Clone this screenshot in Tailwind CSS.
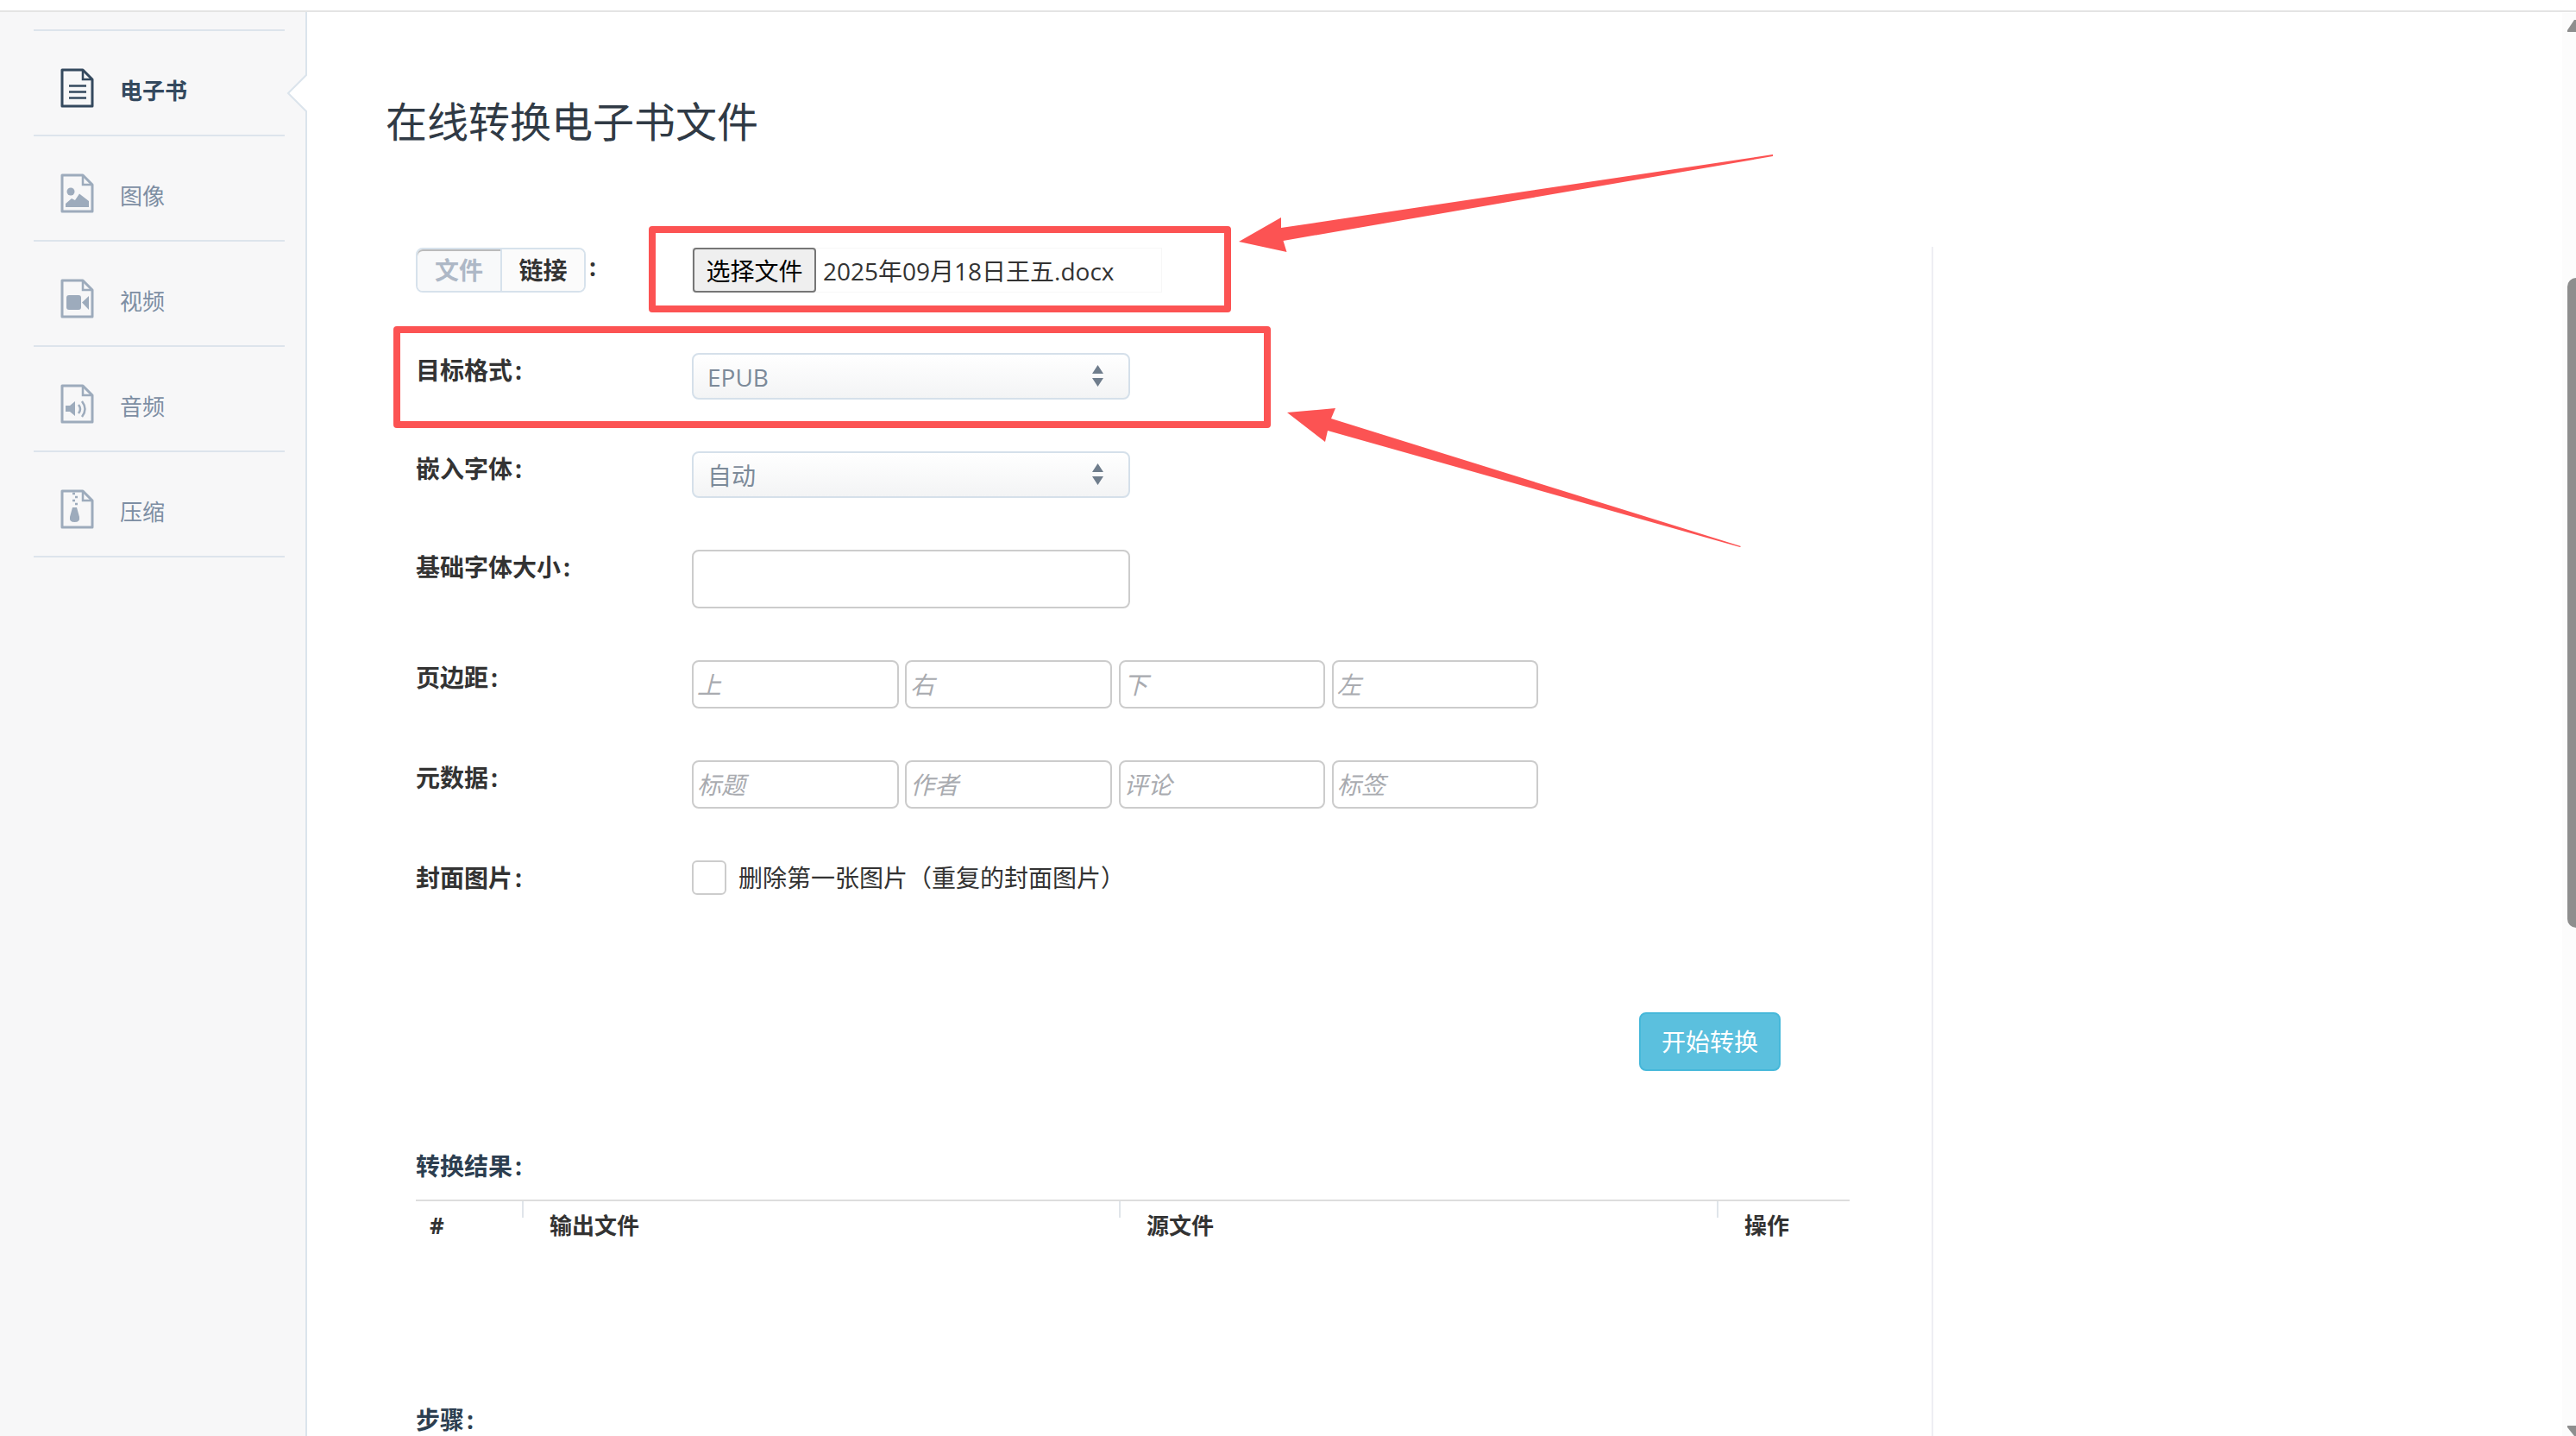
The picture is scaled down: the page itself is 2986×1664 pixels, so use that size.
<!DOCTYPE html>
<html lang="zh-CN">
  <head>
    <meta charset="UTF-8" />
    <title>在线转换电子书文件</title>
    <script src="https://cdn.jsdelivr.net/npm/@tailwindcss/browser@4"></script>
  </head>
  <body class="bg-white text-[#333] antialiased [font-family:'Open_Sans','Noto_Sans_CJK_SC',sans-serif]">
    <div class="relative flex h-[1664px] w-[2986px] flex-col overflow-hidden">
      <!-- top strip -->
      <div class="h-[14px] shrink-0 border-b-2 border-[#e4e4e4]"></div>

      <div class="flex min-h-0 flex-1">
        <!-- sidebar -->
        <aside class="relative w-[356px] shrink-0 border-r-2 border-[#dbe4ec] bg-[#f7f7f8] pt-[20px]">
          <ul class="ml-[39px] w-[291px] border-t-2 border-[#dde4ec] text-[26px] leading-none text-[#7d8ea3]">
            <li class="flex h-[122px] items-start border-b-2 border-[#dde4ec] pl-[31px] pt-[43px] font-bold text-[#34495e]">
              <svg class="mr-[30px] h-[46px] w-[39px]" viewBox="0 0 39 46" fill="none" stroke="#34495e" stroke-width="3">
                <path d="M2 2H26L37 13V44H2Z" stroke-linejoin="round" />
                <path d="M26 2V13H37" stroke-width="2.5" />
                <path d="M10 20.5H30M10 27.5H30M10 34.5H30" stroke-width="2.5" />
              </svg>
              <span class="mt-[13px]">电子书</span>
            </li>
            <li class="flex h-[122px] items-start border-b-2 border-[#dde4ec] pl-[31px] pt-[43px]">
              <svg class="mr-[30px] h-[46px] w-[39px]" viewBox="0 0 39 46" fill="none" stroke="#9dabbc" stroke-width="3">
                <path d="M2 2H26L37 13V44H2Z" stroke-linejoin="round" />
                <path d="M26 2V13H37" stroke-width="2.5" />
                <circle cx="12" cy="21" r="4.5" fill="#9dabbc" stroke="none" />
                <path d="M6 39V35L13 29L17 31L22 23.5L33 32V39Z" fill="#9dabbc" stroke="none" />
              </svg>
              <span class="mt-[13px]">图像</span>
            </li>
            <li class="flex h-[122px] items-start border-b-2 border-[#dde4ec] pl-[31px] pt-[43px]">
              <svg class="mr-[30px] h-[46px] w-[39px]" viewBox="0 0 39 46" fill="none" stroke="#9dabbc" stroke-width="3">
                <path d="M2 2H26L37 13V44H2Z" stroke-linejoin="round" />
                <path d="M26 2V13H37" stroke-width="2.5" />
                <rect x="7" y="19" width="17" height="17" rx="3" fill="#9dabbc" stroke="none" />
                <path d="M25 27.5L33 20V36Z" fill="#9dabbc" stroke="none" />
              </svg>
              <span class="mt-[13px]">视频</span>
            </li>
            <li class="flex h-[122px] items-start border-b-2 border-[#dde4ec] pl-[31px] pt-[43px]">
              <svg class="mr-[30px] h-[46px] w-[39px]" viewBox="0 0 39 46" fill="none" stroke="#9dabbc" stroke-width="3">
                <path d="M2 2H26L37 13V44H2Z" stroke-linejoin="round" />
                <path d="M26 2V13H37" stroke-width="2.5" />
                <path d="M6 25H11L17 20V37L11 32H6Z" fill="#9dabbc" stroke="none" />
                <path d="M21 24Q25 29 21 34M25 20Q32 29 25 38" stroke-width="2.5" />
              </svg>
              <span class="mt-[13px]">音频</span>
            </li>
            <li class="flex h-[122px] items-start border-b-2 border-[#dde4ec] pl-[31px] pt-[43px]">
              <svg class="mr-[30px] h-[46px] w-[39px]" viewBox="0 0 39 46" fill="none" stroke="#9dabbc" stroke-width="3">
                <path d="M2 2H26L37 13V44H2Z" stroke-linejoin="round" />
                <path d="M26 2V13H37" stroke-width="2.5" />
                <path d="M14 5H17M17 9H20M14 13H17M17 17H20" stroke-width="2.5" />
                <path d="M14 21H19L22 32Q23 38 16.5 38Q10 38 11 32Z" fill="#9dabbc" stroke="none" />
              </svg>
              <span class="mt-[13px]">压缩</span>
            </li>
          </ul>
          <!-- active item notch -->
          <svg class="absolute right-[-2px] top-[71px] h-[46px] w-[24px]" viewBox="0 0 24 46">
            <path d="M24 1L2 23L24 45Z" fill="#fff" />
            <path d="M24 1L2 23L24 45" fill="none" stroke="#dbe4ec" stroke-width="2" />
          </svg>
        </aside>

        <!-- main content -->
        <main class="min-w-0 flex-1 pl-[91px]">
          <h1 class="pt-[92px] text-[48px] font-normal leading-[70px] text-[#303a45]">在线转换电子书文件</h1>

          <div class="mt-[110px] h-[1400px] w-[1794px] border-r-2 border-[#eeeef3] pl-[35px] pt-px">
            <!-- file source -->
            <div class="flex h-[52px]">
              <div class="flex h-[52px] w-[320px] shrink-0 items-start text-[28px] font-bold">
                <div class="flex h-[52px] w-[197px] rounded-[8px] border-2 border-[#d7e2ec] leading-[48px]">
                  <span class="w-[98px] rounded-l-[6px] border-r-2 border-[#d7e2ec] bg-[#f8f9fa] text-center text-[#aeb8c6] shadow-[inset_0_2px_0_#bbb]">文件</span>
                  <span class="flex-1 rounded-r-[6px] bg-[#fbfbfb] text-center text-[#333]">链接</span>
                </div>
                <span class="ml-[4px] leading-[44px]">:</span>
              </div>
              <div class="flex h-[52px] w-[545px] items-center border border-[#f7f7f7]">
                <button class="h-[52px] w-[143px] rounded-[4px] border-2 border-[#767676] bg-[#efefef] pt-[2px] text-[28px] leading-none text-black">选择文件</button>
                <span class="ml-[8px] pt-[1px] text-[28px] text-[#333]">2025年09月18日王五.docx</span>
              </div>
            </div>

            <!-- target format -->
            <div class="mt-[70px] flex">
              <label class="w-[320px] shrink-0 text-[28px] font-bold leading-[40px]">目标格式<span class="ml-[3px]">:</span></label>
              <div class="relative h-[54px] w-[508px]">
                <select class="h-[54px] w-[508px] appearance-none rounded-[8px] border-2 border-[#d5e0ea] bg-gradient-to-b from-white to-[#f3f4f5] pl-[16px] pt-[2px] text-[28px] text-[#7c8a99]">
                  <option>EPUB</option>
                </select>
                <svg class="pointer-events-none absolute right-[31px] top-[14px] h-[25px] w-[13px]" viewBox="0 0 13 25" fill="#6f7d8c">
                  <path d="M6.5 0L13 10H0ZM0 15H13L6.5 25Z" />
                </svg>
              </div>
            </div>

            <!-- embed font -->
            <div class="mt-[60px] flex">
              <label class="w-[320px] shrink-0 text-[28px] font-bold leading-[40px]">嵌入字体<span class="ml-[3px]">:</span></label>
              <div class="relative h-[54px] w-[508px]">
                <select class="h-[54px] w-[508px] appearance-none rounded-[8px] border-2 border-[#d5e0ea] bg-gradient-to-b from-white to-[#f3f4f5] pl-[16px] pt-[2px] text-[28px] text-[#7c8a99]">
                  <option>自动</option>
                </select>
                <svg class="pointer-events-none absolute right-[31px] top-[14px] h-[25px] w-[13px]" viewBox="0 0 13 25" fill="#6f7d8c">
                  <path d="M6.5 0L13 10H0ZM0 15H13L6.5 25Z" />
                </svg>
              </div>
            </div>

            <!-- base font size -->
            <div class="mt-[60px] flex">
              <label class="w-[320px] shrink-0 text-[28px] font-bold leading-[40px]">基础字体大小<span class="ml-[3px]">:</span></label>
              <input class="h-[68px] w-[508px] rounded-[8px] border-2 border-[#ccc] bg-white" />
            </div>

            <!-- margins -->
            <div class="mt-[60px] flex">
              <label class="w-[320px] shrink-0 text-[28px] font-bold leading-[40px]">页边距<span class="ml-[3px]">:</span></label>
              <div class="flex gap-[7.75px]">
                <input placeholder="上" class="h-[56px] w-[239.5px] rounded-[8px] border-2 border-[#ccc] px-[4px] text-[28px] placeholder:italic placeholder:text-[#a9abb0]" />
                <input placeholder="右" class="h-[56px] w-[239.5px] rounded-[8px] border-2 border-[#ccc] px-[4px] text-[28px] placeholder:italic placeholder:text-[#a9abb0]" />
                <input placeholder="下" class="h-[56px] w-[239.5px] rounded-[8px] border-2 border-[#ccc] px-[4px] text-[28px] placeholder:italic placeholder:text-[#a9abb0]" />
                <input placeholder="左" class="h-[56px] w-[239.5px] rounded-[8px] border-2 border-[#ccc] px-[4px] text-[28px] placeholder:italic placeholder:text-[#a9abb0]" />
              </div>
            </div>

            <!-- metadata -->
            <div class="mt-[60px] flex">
              <label class="w-[320px] shrink-0 text-[28px] font-bold leading-[40px]">元数据<span class="ml-[3px]">:</span></label>
              <div class="flex gap-[7.75px]">
                <input placeholder="标题" class="h-[56px] w-[239.5px] rounded-[8px] border-2 border-[#ccc] px-[4px] text-[28px] placeholder:italic placeholder:text-[#a9abb0]" />
                <input placeholder="作者" class="h-[56px] w-[239.5px] rounded-[8px] border-2 border-[#ccc] px-[4px] text-[28px] placeholder:italic placeholder:text-[#a9abb0]" />
                <input placeholder="评论" class="h-[56px] w-[239.5px] rounded-[8px] border-2 border-[#ccc] px-[4px] text-[28px] placeholder:italic placeholder:text-[#a9abb0]" />
                <input placeholder="标签" class="h-[56px] w-[239.5px] rounded-[8px] border-2 border-[#ccc] px-[4px] text-[28px] placeholder:italic placeholder:text-[#a9abb0]" />
              </div>
            </div>

            <!-- cover -->
            <div class="mt-[60px] flex">
              <label class="w-[320px] shrink-0 text-[28px] font-bold leading-[40px]">封面图片<span class="ml-[3px]">:</span></label>
              <div class="flex h-[40px] items-center">
                <span class="h-[40px] w-[40px] rounded-[6px] border-2 border-[#ccc] bg-white"></span>
                <span class="ml-[14px] text-[28px] text-[#333]">删除第一张图片（重复的封面图片）</span>
              </div>
            </div>

            <button class="ml-[1418px] mt-[136px] block h-[68px] w-[164px] rounded-[8px] border-2 border-[#46b8da] bg-[#5bc0de] text-[28px] leading-none text-white">开始转换</button>

            <h3 class="mt-[90px] text-[28px] font-bold leading-[40px] text-[#2c3e50]">转换结果<span class="ml-[3px]">:</span></h3>
            <table class="mt-[19px] w-[1662px] table-fixed border-t-2 border-[#ddd] text-left text-[26px] font-bold">
              <thead>
                <tr class="h-[58px]">
                  <th class="w-[123px] pl-[16px]">#</th>
                  <th class="relative w-[692px] pl-[32px] before:absolute before:left-0 before:top-0 before:h-[19px] before:w-[2px] before:bg-[#e0e5ea]">输出文件</th>
                  <th class="relative w-[693px] pl-[32px] before:absolute before:left-0 before:top-0 before:h-[19px] before:w-[2px] before:bg-[#e0e5ea]">源文件</th>
                  <th class="relative pl-[32px] before:absolute before:left-0 before:top-0 before:h-[19px] before:w-[2px] before:bg-[#e0e5ea]">操作</th>
                </tr>
              </thead>
            </table>

            <h3 class="mt-[176px] text-[28px] font-bold leading-[40px] text-[#2c3e50]">步骤<span class="ml-[3px]">:</span></h3>
          </div>
        </main>
      </div>

      <!-- scrollbar -->
      <div class="absolute bottom-0 right-0 top-[15px] w-[16px] bg-[#fcfcfc]">
        <div class="absolute left-[6px] right-0 top-[307px] h-[753px] rounded-l-[10px] bg-[#8e8e8e]"></div>
        <svg class="absolute left-[6px] top-[8px] h-[14px] w-[10px]" viewBox="0 0 10 14" fill="#8e8e8e"><path d="M0 14V12L8 0H10V14Z" /></svg>
        <svg class="absolute bottom-0 left-[6px] h-[12px] w-[10px]" viewBox="0 0 10 12" fill="#8e8e8e"><path d="M0 0H10V12H8L0 2Z" /></svg>
      </div>

      <!-- red annotations drawn over the shot -->
      <div class="absolute left-[752px] top-[262px] h-[100px] w-[675px] rounded-[4px] border-8 border-[#fc5353]"></div>
      <div class="absolute left-[456px] top-[378px] h-[118px] w-[1017px] rounded-[4px] border-8 border-[#fc5353]"></div>
      <svg class="pointer-events-none absolute left-0 top-0 h-[1664px] w-[2986px]" viewBox="0 0 2986 1664" fill="#fc5353">
        <polygon points="1436,280 1485,252 1485,264 2055,179 2055,181 1487.5,279 1491.5,292" />
        <polygon points="1492,478 1548,473 1543,485 2018,633 2017,634 1539,499 1536,512" />
      </svg>
    </div>
  </body>
</html>
